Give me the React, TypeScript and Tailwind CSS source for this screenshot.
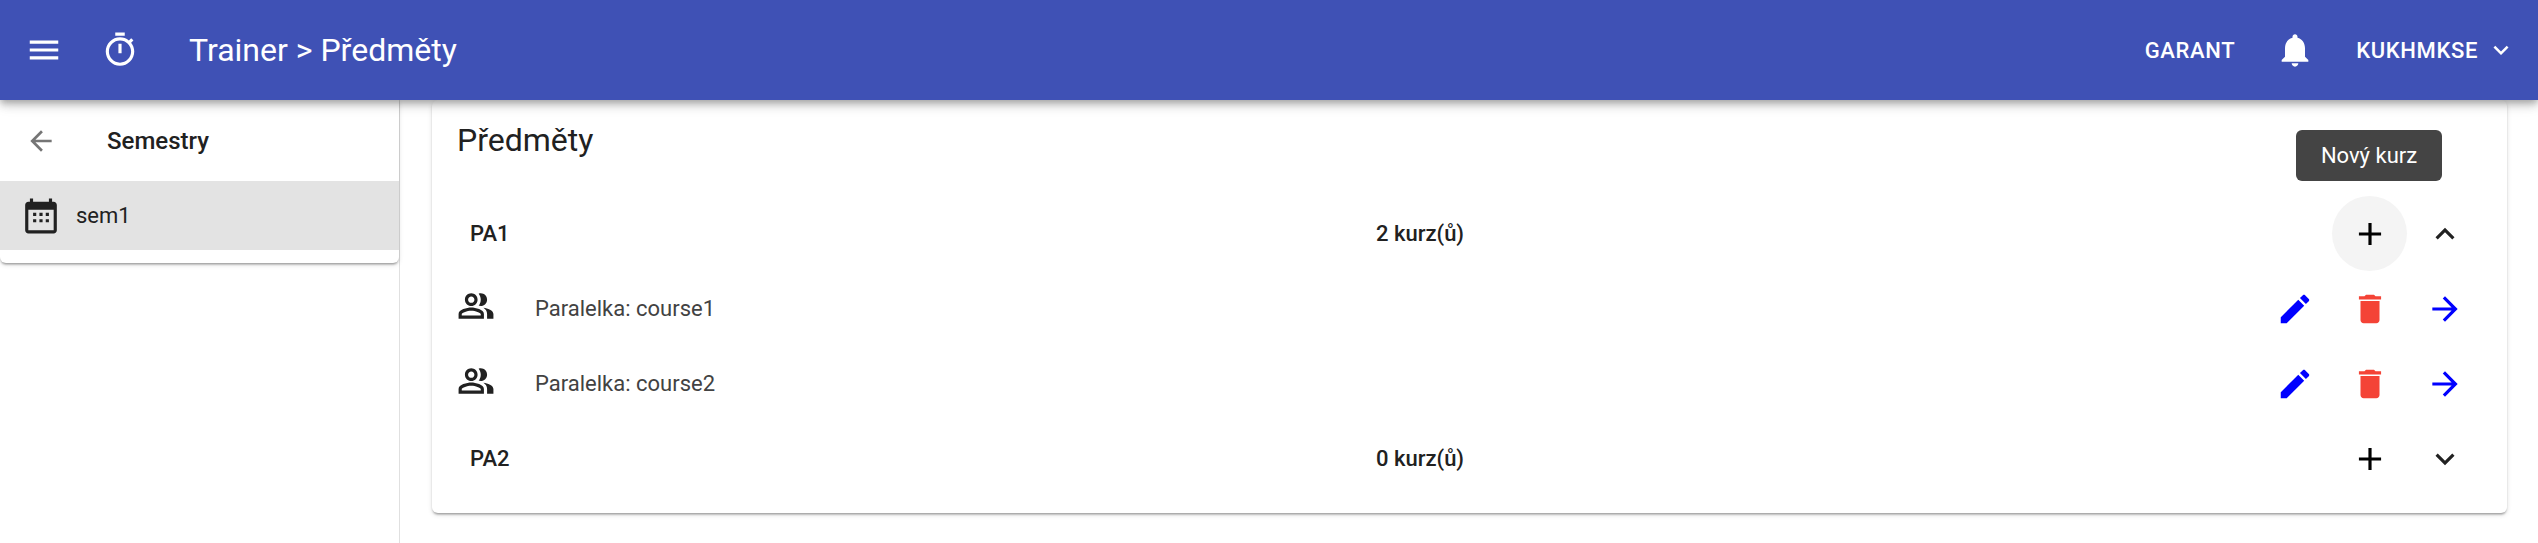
const P = {
  menu: "M3 18h18v-2H3v2zm0-5h18v-2H3v2zm0-7v2h18V6H3z",
  timer: "M15 1H9v2h6V1zm-4 13h2V8h-2v6zm8.03-6.61l1.42-1.42c-.43-.51-.9-.99-1.41-1.41l-1.42 1.42C16.07 4.74 14.12 4 12 4c-4.97 0-9 4.03-9 9s4.02 9 9 9 9-4.03 9-9c0-2.12-.74-4.07-1.97-5.61zM12 20c-3.87 0-7-3.13-7-7s3.13-7 7-7 7 3.13 7 7-3.13 7-7 7z",
  bell: "M12 22c1.1 0 2-.9 2-2h-4c0 1.1.89 2 2 2zm6-6v-5c0-3.07-1.64-5.64-4.5-6.32V4c0-.83-.67-1.5-1.5-1.5s-1.5.67-1.5 1.5v.68C7.63 5.36 6 7.92 6 11v5l-2 2v1h16v-1l-2-2z",
  down: "M7.41 8.59 12 13.17l4.59-4.58L18 10l-6 6-6-6 1.41-1.41z",
  up: "M7.41 15.41 12 10.83l4.59 4.58L18 14l-6-6-6 6z",
  back: "M20 11H7.83l5.59-5.59L12 4l-8 8 8 8 1.41-1.41L7.83 13H20v-2z",
  calendar: "M20 3h-1V1h-2v2H7V1H5v2H4c-1.1 0-2 .9-2 2v16c0 1.1.9 2 2 2h16c1.1 0 2-.9 2-2V5c0-1.1-.9-2-2-2zm0 18H4V8h16v13zM7 10h2v2H7zm4 0h2v2h-2zm4 0h2v2h-2zm-8 4h2v2H7zm4 0h2v2h-2zm4 0h2v2h-2z",
  people: "M16.67 13.13C18.04 14.06 19 15.32 19 17v3h4v-3c0-2.18-3.57-3.47-6.33-3.87zM15 12c2.21 0 4-1.79 4-4s-1.79-4-4-4c-.47 0-.91.1-1.33.24C14.5 5.27 15 6.58 15 8s-.5 2.73-1.33 3.76c.42.14.86.24 1.33.24zm-6 0c2.21 0 4-1.79 4-4s-1.79-4-4-4-4 1.79-4 4 1.79 4 4 4zm0-6c1.1 0 2 .9 2 2s-.9 2-2 2-2-.9-2-2 .9-2 2-2zm0 7c-2.67 0-8 1.34-8 4v3h16v-3c0-2.66-5.33-4-8-4zm6 5H3v-.99C3.2 16.29 6.3 15 9 15s5.8 1.29 6 2v1z",
  edit: "M3 17.25V21h3.75L17.81 9.94l-3.75-3.75L3 17.25zM20.71 7.04c.39-.39.39-1.02 0-1.41l-2.34-2.34c-.39-.39-1.02-.39-1.41 0l-1.83 1.83 3.75 3.75 1.83-1.83z",
  del: "M6 19c0 1.1.9 2 2 2h8c1.1 0 2-.9 2-2V7H6v12zM19 4h-3.5l-1-1h-5l-1 1H5v2h14V4z",
  add: "M19 13h-6v6h-2v-6H5v-2h6V5h2v6h6v2z",
  arrow: "M12 4l-1.41 1.41L16.17 11H4v2h12.17l-5.58 5.59L12 20l8-8z",
};

function Icon({ d, className }: { d: string; className: string }) {
  return (
    <svg viewBox="0 0 24 24" fill="currentColor" className={className}>
      <path d={d} />
    </svg>
  );
}

function ActionCell({ children, hover }: { children: React.ReactNode; hover?: boolean }) {
  return (
    <div className={`flex h-[75px] w-[75px] shrink-0 items-center justify-center rounded-full ${hover ? "bg-[#f4f4f4]" : ""}`}>
      {children}
    </div>
  );
}

function CourseRow({ name }: { name: string }) {
  return (
    <div className="flex h-[75px] items-center">
      <Icon d={P.people} className="mb-[6px] h-[38px] w-[38px] shrink-0 text-[#212121]" />
      <span className="ml-[40px] text-[22px] text-[#424242]">{name}</span>
      <div className="ml-auto flex">
        <ActionCell><Icon d={P.edit} className="h-[38px] w-[38px] text-[#0000ff]" /></ActionCell>
        <ActionCell><Icon d={P.del} className="h-[38px] w-[38px] text-[#f44336]" /></ActionCell>
        <ActionCell><Icon d={P.arrow} className="h-[38px] w-[38px] text-[#0000ff]" /></ActionCell>
      </div>
    </div>
  );
}

function SubjectRow({ name, count, open, tip }: { name: string; count: string; open?: boolean; tip?: boolean }) {
  return (
    <div className="flex h-[75px] items-center">
      <span className="ml-[13px] w-[906px] shrink-0 text-[22px] font-medium text-[#212121]">{name}</span>
      <span className="text-[22px] font-medium text-[#212121]">{count}</span>
      <div className="relative ml-auto flex">
        <ActionCell hover={tip}><Icon d={P.add} className="h-[38px] w-[38px] text-black" /></ActionCell>
        <ActionCell><Icon d={open ? P.up : P.down} className="h-[38px] w-[38px] text-[#212121]" /></ActionCell>
        {tip && (
          <div className="absolute left-[-36px] top-[-66px] flex h-[51px] w-[146px] items-center justify-center rounded-[6px] bg-[#444444] text-[22px] text-white">
            Nový kurz
          </div>
        )}
      </div>
    </div>
  );
}

export default function App() {
  return (
    <div className="flex h-[543px] w-[2538px] flex-col overflow-hidden bg-white font-['Roboto',sans-serif]">
      <header className="relative z-10 flex h-[100px] shrink-0 items-center bg-[#3f51b5] text-white shadow-[0_3px_6px_-1px_rgba(0,0,0,0.2),0_6px_8px_0_rgba(0,0,0,0.14),0_2px_16px_0_rgba(0,0,0,0.12)]">
        <Icon d={P.menu} className="ml-[25px] h-[38px] w-[38px]" />
        <Icon d={P.timer} className="ml-[38px] h-[38px] w-[38px]" />
        <h1 className="ml-[50px] text-[32px] font-normal">Trainer &gt; Předměty</h1>
        <span className="ml-auto text-[22px] font-medium tracking-[0.64px]">GARANT</span>
        <Icon d={P.bell} className="ml-[40px] h-[40px] w-[40px]" />
        <span className="ml-[41px] text-[22px] font-medium tracking-[0.64px]">KUKHMKSE</span>
        <Icon d={P.down} className="ml-[8px] mr-[22px] h-[30px] w-[30px]" />
      </header>
      <div className="flex min-h-0 flex-1">
        <aside className="w-[400px] shrink-0 border-r border-[#e0e0e0]">
          <div className="h-[163px] rounded-b-[6px] bg-white shadow-[0_3px_2px_-2px_rgba(0,0,0,0.2),0_2px_2px_0_rgba(0,0,0,0.14),0_2px_5px_0_rgba(0,0,0,0.12)]">
            <div className="flex h-[81px] items-center pl-[25px]">
              <Icon d={P.back} className="h-[32px] w-[32px] text-[#757575]" />
              <span className="ml-[50px] text-[24px] font-medium text-[#212121]">Semestry</span>
            </div>
            <div className="flex h-[69px] items-center bg-[#e3e3e3] pl-[22px]">
              <Icon d={P.calendar} className="h-[38px] w-[38px] text-[#212121]" />
              <span className="ml-[16px] text-[22px] text-[#212121]">sem1</span>
            </div>
          </div>
        </aside>
        <main className="min-w-0 flex-1 pl-[32px] pr-[31px]">
          <div className="h-[413px] rounded-[6px] bg-white pl-[25px] pr-[25px] shadow-[0_3px_2px_-2px_rgba(0,0,0,0.2),0_2px_2px_0_rgba(0,0,0,0.14),0_2px_5px_0_rgba(0,0,0,0.12)]">
            <h2 className="flex h-[96px] items-center pb-[16px] text-[32px] font-normal text-[#212121]">Předměty</h2>
            <SubjectRow name="PA1" count="2 kurz(ů)" open tip />
            <CourseRow name="Paralelka: course1" />
            <CourseRow name="Paralelka: course2" />
            <SubjectRow name="PA2" count="0 kurz(ů)" />
          </div>
        </main>
      </div>
    </div>
  );
}
